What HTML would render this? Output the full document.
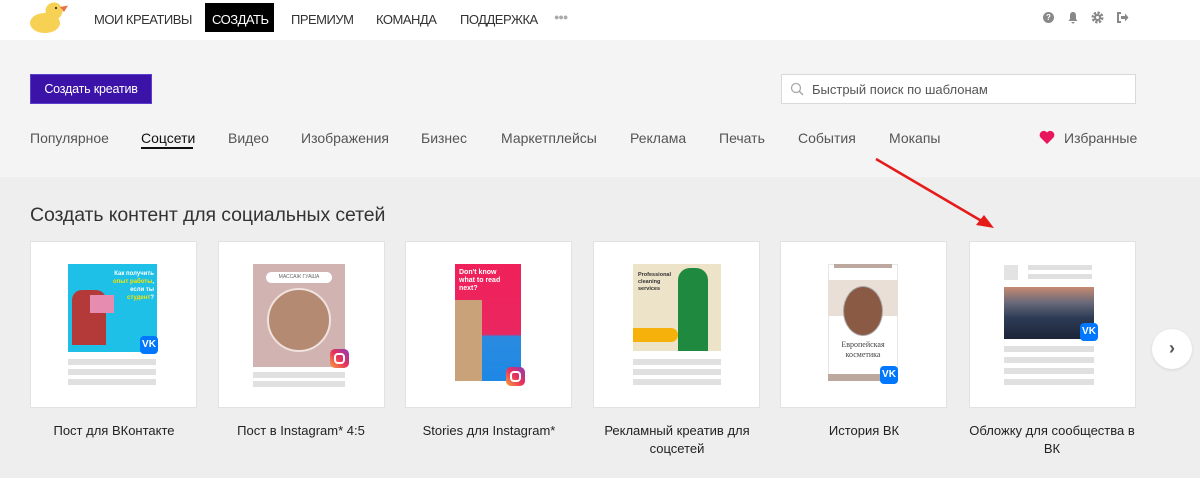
<!DOCTYPE html>
<html><head><meta charset="utf-8"><style>
*{margin:0;padding:0;box-sizing:border-box}
body{width:1200px;height:478px;overflow:hidden;background:#eeeeee;font-family:"Liberation Sans",sans-serif;position:relative}
.a{position:absolute}
.hdr{left:0;top:0;width:1200px;height:40px;background:#fff}
.nav{top:12px;font-size:13px;color:#333;letter-spacing:-0.5px}
.top{left:0;top:40px;width:1200px;height:137px;background:#f4f4f4}
.tab{top:130px;font-size:14px;color:#555}
.card{top:241px;width:167px;height:167px;background:#fff;border:1px solid #e2e2e2}
.ln{background:#e0e0e0;height:6px}
.lbl{top:422px;width:180px;text-align:center;font-size:13px;color:#222;line-height:18px}
.vk{width:18px;height:18px;background:#0077ff;border-radius:4px;color:#fff;font-size:10px;font-weight:bold;text-align:center;line-height:18px}
.ig{width:19px;height:19px;border-radius:5px;background:linear-gradient(45deg,#f9a03f,#e8315b,#8a3ab9)}
.ig:after{content:"";position:absolute;left:4px;top:4px;width:11px;height:11px;border:2px solid #fff;border-radius:4px;box-sizing:border-box}
</style></head><body>
<div class="a hdr"></div>
<div class="a" style="left:28px;top:0px">
<svg width="42" height="36" viewBox="0 0 42 36"><ellipse cx="17" cy="23" rx="15" ry="10" fill="#f7d154"/><circle cx="26" cy="11" r="8.5" fill="#f7d154"/><path d="M32 7 L40 5.5 L36 12 Z" fill="#e8734a"/><circle cx="28" cy="8" r="1.1" fill="#333"/></svg></div>
<div class="a nav" style="left:94px">МОИ КРЕАТИВЫ</div>
<div class="a" style="left:205px;top:3px;width:69px;height:29px;background:#000"></div>
<div class="a nav" style="left:212px;color:#fff">СОЗДАТЬ</div>
<div class="a nav" style="left:291px">ПРЕМИУМ</div>
<div class="a nav" style="left:376px">КОМАНДА</div>
<div class="a nav" style="left:460px">ПОДДЕРЖКА</div>
<div class="a" style="left:554px;top:12px;color:#aaa;font-size:9px;letter-spacing:-1px">●●●</div>
<div class="a" style="left:1043px;top:12px;width:11px;height:11px;border-radius:50%;background:#888;color:#fff;font-size:8px;text-align:center;line-height:11px;font-weight:bold">?</div>
<svg class="a" style="left:1067px;top:11px" width="12" height="13" viewBox="0 0 12 13"><path d="M6 1C3.5 1 3 3 3 5v3L1.5 10h9L9 8V5C9 3 8.5 1 6 1Z M4.5 11h3a1.5 1.5 0 0 1-3 0Z" fill="#888"/></svg>
<svg class="a" style="left:1091px;top:11px" width="13" height="13" viewBox="0 0 13 13"><circle cx="6.5" cy="6.5" r="4.5" fill="none" stroke="#888" stroke-width="3" stroke-dasharray="2.2 1.3"/><circle cx="6.5" cy="6.5" r="3.5" fill="#888"/><circle cx="6.5" cy="6.5" r="1.5" fill="#fff"/></svg>
<svg class="a" style="left:1116px;top:11px" width="13" height="13" viewBox="0 0 13 13"><path d="M5 2H2v9h3" fill="none" stroke="#888" stroke-width="2"/><path d="M5 5h4V2.5l3.5 4-3.5 4V8H5Z" fill="#888"/></svg>
<div class="a top"></div>
<div class="a" style="left:30px;top:74px;width:122px;height:30px;background:#3c13a8;border:1px solid #5a3fcf;color:#fff;font-size:12.5px;text-align:center;line-height:28px;letter-spacing:-0.2px">Создать креатив</div>
<div class="a" style="left:781px;top:74px;width:355px;height:30px;background:#fff;border:1px solid #d9d9d9"></div>
<svg class="a" style="left:790px;top:82px" width="14" height="14" viewBox="0 0 14 14"><circle cx="6" cy="6" r="4.5" fill="none" stroke="#aaa" stroke-width="1.3"/><path d="M9.3 9.3L13 13" stroke="#aaa" stroke-width="1.5"/></svg>
<div class="a" style="left:812px;top:82px;font-size:13px;color:#555">Быстрый поиск по шаблонам</div>
<div class="a tab" style="left:30px">Популярное</div>
<div class="a tab" style="left:141px;color:#111">Соцсети</div>
<div class="a" style="left:141px;top:147px;width:52px;height:2px;background:#111"></div>
<div class="a tab" style="left:228px">Видео</div>
<div class="a tab" style="left:301px">Изображения</div>
<div class="a tab" style="left:421px">Бизнес</div>
<div class="a tab" style="left:501px">Маркетплейсы</div>
<div class="a tab" style="left:630px">Реклама</div>
<div class="a tab" style="left:719px">Печать</div>
<div class="a tab" style="left:798px">События</div>
<div class="a tab" style="left:889px">Мокапы</div>
<svg class="a" style="left:1039px;top:130px" width="16" height="14" viewBox="0 0 16 14"><path d="M8 14L1.5 7.5A3.8 3.8 0 0 1 8 2.5a3.8 3.8 0 0 1 6.5 5Z" fill="#e8175d"/></svg>
<div class="a tab" style="left:1064px">Избранные</div>
<svg class="a" style="left:870px;top:155px" width="130" height="80" viewBox="0 0 130 80"><path d="M6 4L115 68" stroke="#e51a1a" stroke-width="2.5"/><path d="M124 73L106 70L114 60Z" fill="#e51a1a"/></svg>
<div class="a" style="left:30px;top:204px;font-size:19.5px;color:#333;letter-spacing:-0.1px">Создать контент для социальных сетей</div>

<div class="a card" style="left:30px"></div>
<div class="a card" style="left:218px"></div>
<div class="a card" style="left:405px"></div>
<div class="a card" style="left:593px"></div>
<div class="a card" style="left:780px"></div>
<div class="a card" style="left:969px"></div>

<!-- card1 -->
<div class="a" style="left:68px;top:264px;width:89px;height:88px;background:#1ec0e8"></div>
<div class="a" style="left:72px;top:290px;width:34px;height:55px;background:#b43a3a;border-radius:10px 10px 0 0"></div>
<div class="a" style="left:90px;top:295px;width:24px;height:18px;background:#e58cb0"></div>
<div class="a" style="left:104px;top:270px;width:50px;font-size:6px;color:#fff;font-weight:bold;text-align:right;line-height:8px">Как получить <span style="color:#f5e400">опыт работы</span>, если ты <span style="color:#f5e400">студент</span>?</div>
<div class="a vk" style="left:140px;top:336px">VK</div>
<div class="a ln" style="left:68px;top:359px;width:88px"></div>
<div class="a ln" style="left:68px;top:369px;width:88px"></div>
<div class="a ln" style="left:68px;top:379px;width:88px"></div>
<!-- card2 -->
<div class="a" style="left:253px;top:264px;width:92px;height:103px;background:#d1b3b1"></div>
<div class="a" style="left:266px;top:272px;width:66px;height:11px;background:#fff;border-radius:6px;font-size:5px;text-align:center;line-height:11px;color:#666">МАССАЖ ГУАША</div>
<div class="a" style="left:267px;top:288px;width:64px;height:64px;border-radius:50%;background:#b58a72;border:2px solid #f0e2de"></div>
<div class="a ig" style="left:330px;top:349px"></div>
<div class="a ln" style="left:253px;top:372px;width:92px"></div>
<div class="a ln" style="left:253px;top:381px;width:92px"></div>
<!-- card3 -->
<div class="a" style="left:455px;top:264px;width:66px;height:117px;background:linear-gradient(180deg,#f0205a 0%,#ea2760 60%,#2a8be0 62%,#1e88e5 100%)"></div>
<div class="a" style="left:459px;top:269px;width:50px;font-size:7px;color:#fff;font-weight:bold;line-height:8px">Don't know what to read next?</div>
<div class="a" style="left:455px;top:300px;width:27px;height:81px;background:#c9a27a"></div>
<div class="a ig" style="left:506px;top:367px"></div>
<!-- card4 -->
<div class="a" style="left:633px;top:264px;width:88px;height:87px;background:#ece3c8"></div>
<div class="a" style="left:678px;top:268px;width:30px;height:83px;background:#1f8a3f;border-radius:12px 12px 0 0"></div>
<div class="a" style="left:638px;top:272px;width:38px;font-size:5.5px;font-weight:bold;color:#333;line-height:7px">Professional cleaning services</div>
<div class="a" style="left:633px;top:328px;width:45px;height:14px;background:#f6b10a;border-radius:0 8px 8px 0"></div>
<div class="a ln" style="left:633px;top:359px;width:88px"></div>
<div class="a ln" style="left:633px;top:369px;width:88px"></div>
<div class="a ln" style="left:633px;top:379px;width:88px"></div>
<!-- card5 -->
<div class="a" style="left:828px;top:264px;width:70px;height:117px;background:#fff;border:1px solid #e6e6e6"></div>
<div class="a" style="left:834px;top:264px;width:58px;height:4px;background:#bca89e"></div>
<div class="a" style="left:828px;top:280px;width:70px;height:36px;background:#eadfd6"></div>
<div class="a" style="left:843px;top:286px;width:40px;height:50px;border-radius:50%;background:#8a5a44;border:1px solid #aaa"></div>
<div class="a" style="left:828px;top:340px;width:70px;font-family:'Liberation Serif',serif;font-size:8px;text-align:center;color:#444;line-height:10px">Европейская<br>косметика</div>
<div class="a" style="left:828px;top:374px;width:70px;height:7px;background:#bca89e"></div>
<div class="a vk" style="left:880px;top:366px">VK</div>
<!-- card6 -->
<div class="a" style="left:1004px;top:265px;width:14px;height:15px;background:#e3e3e3"></div>
<div class="a ln" style="left:1028px;top:265px;width:64px;height:5px"></div>
<div class="a ln" style="left:1028px;top:274px;width:64px;height:5px"></div>
<div class="a" style="left:1004px;top:287px;width:90px;height:52px;background:linear-gradient(180deg,#c78a70 0%,#6a6a7a 30%,#2c3a55 60%,#1d2638 100%)"></div>
<div class="a vk" style="left:1080px;top:323px">VK</div>
<div class="a ln" style="left:1004px;top:346px;width:90px"></div>
<div class="a ln" style="left:1004px;top:357px;width:90px"></div>
<div class="a ln" style="left:1004px;top:368px;width:90px"></div>
<div class="a ln" style="left:1004px;top:379px;width:90px"></div>

<div class="a" style="left:1152px;top:329px;width:40px;height:40px;border-radius:50%;background:#fff;box-shadow:0 1px 3px rgba(0,0,0,.1);color:#555;font-size:18px;font-weight:bold;text-align:center;line-height:38px">›</div>

<div class="a lbl" style="left:24px">Пост для ВКонтакте</div>
<div class="a lbl" style="left:211px">Пост в Instagram* 4:5</div>
<div class="a lbl" style="left:399px">Stories для Instagram*</div>
<div class="a lbl" style="left:587px">Рекламный креатив для соцсетей</div>
<div class="a lbl" style="left:774px">История ВК</div>
<div class="a lbl" style="left:962px">Обложку для сообщества в ВК</div>
</body></html>
